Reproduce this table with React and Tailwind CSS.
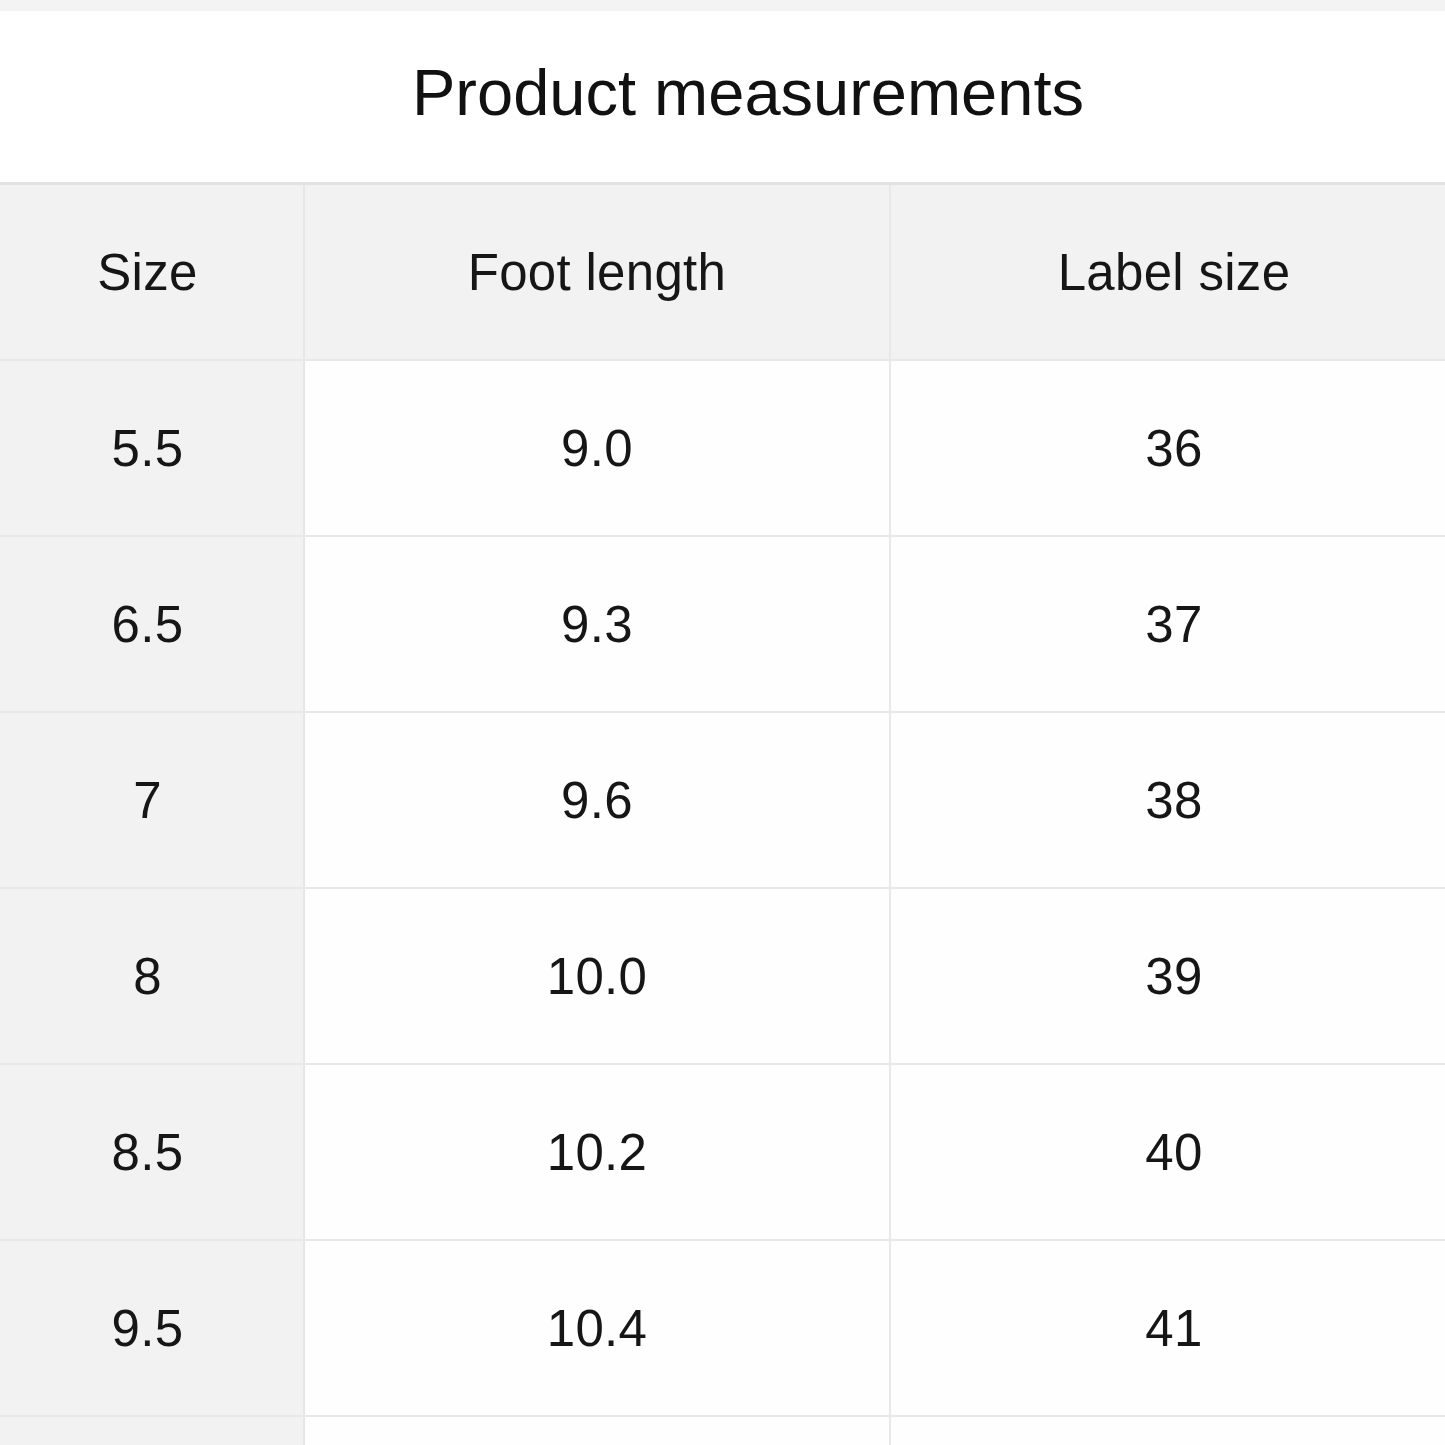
const rows = [
  ['5.5', '9.0', '36'],
  ['6.5', '9.3', '37'],
  ['7', '9.6', '38'],
  ['8', '10.0', '39'],
  ['8.5', '10.2', '40'],
  ['9.5', '10.4', '41'],
  ['', '', ''],
]

function Row({ cells, header }) {
  return (
    <div className="grid grid-cols-[305px_586px_1fr] h-[176px] border-b-2 border-[#e8e8e8]">
      <div className="flex items-center justify-center pr-[8px] bg-[#f2f2f2] border-r-2 border-[#e6e6e6]">{cells[0]}</div>
      <div className={`flex items-center justify-center border-r-2 border-[#e8e8e8] ${header ? 'bg-[#f2f2f2]' : 'bg-[#fefefe]'}`}>{cells[1]}</div>
      <div className={`flex items-center justify-center pl-[12px] ${header ? 'bg-[#f2f2f2]' : 'bg-[#fefefe]'}`}>{cells[2]}</div>
    </div>
  )
}

export default function App() {
  return (
    <div className="w-[1445px] h-[1445px] overflow-hidden bg-white text-[#161616]" style={{ fontFamily: '"Liberation Sans", Arial, sans-serif' }}>
      <div className="h-[11px] bg-[#f3f3f3]"></div>
      <div className="h-[171px] flex items-center justify-center pb-[8px] pl-[51px]">
        <h1 className="text-[65px] leading-none text-[#111]">Product measurements</h1>
      </div>
      <div className="border-t-[3px] border-[#e2e2e2] text-[51px] leading-none tracking-[0.3px]">
        <Row cells={['Size', 'Foot length', 'Label size']} header />
        {rows.map((r, i) => (
          <Row key={i} cells={r} />
        ))}
      </div>
    </div>
  )
}
